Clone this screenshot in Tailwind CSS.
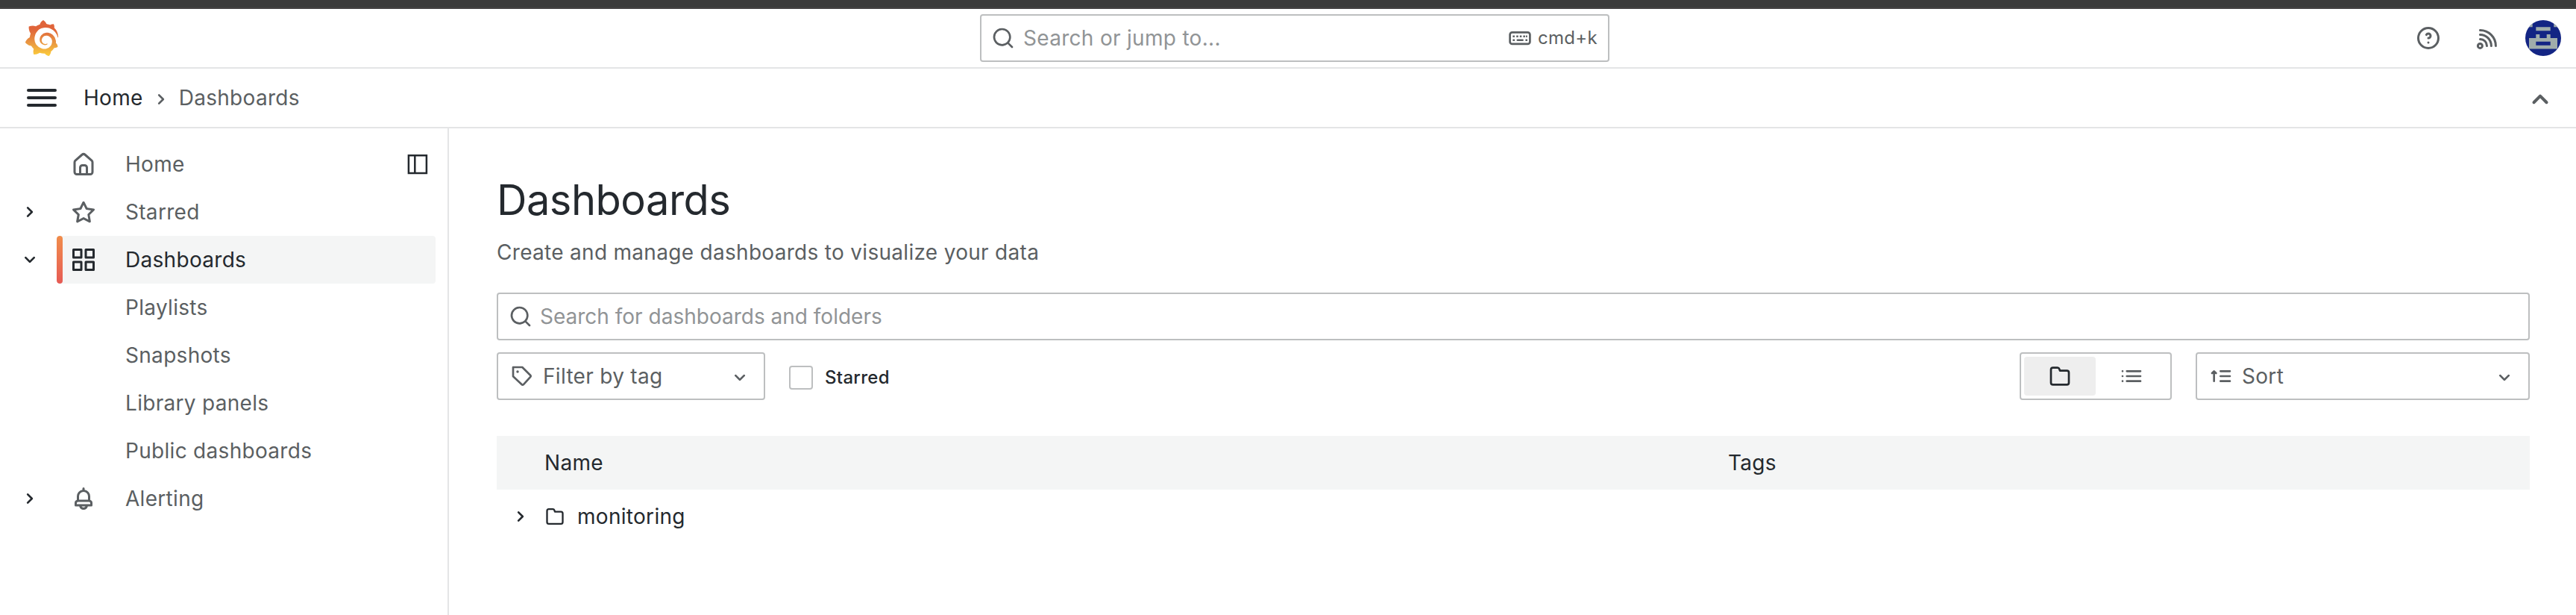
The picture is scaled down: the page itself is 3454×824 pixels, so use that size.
<!DOCTYPE html>
<html lang="en">
<head>
<meta charset="utf-8">
<title>Dashboards - Grafana</title>
<script src="https://cdn.jsdelivr.net/npm/@tailwindcss/browser@4"></script>
</head>
<body class="bg-white">
<svg class="hidden">
  <symbol id="right" viewBox="0 0 24 24"><path d="M14.83,11.29,10.59,7.05a1,1,0,0,0-1.42,0,1,1,0,0,0,0,1.41L12.71,12,9.17,15.54a1,1,0,0,0,0,1.41,1,1,0,0,0,.71.29,1,1,0,0,0,.71-.29l4.24-4.24A1,1,0,0,0,14.83,11.29Z"/></symbol>
  <symbol id="down" viewBox="0 0 24 24"><path d="M17,9.17a1,1,0,0,0-1.41,0L12,12.71,8.46,9.17a1,1,0,0,0-1.41,0,1,1,0,0,0,0,1.42l4.24,4.24a1,1,0,0,0,1.42,0L17,10.59A1,1,0,0,0,17,9.17Z"/></symbol>
  <symbol id="search" viewBox="0 0 24 24"><path d="M21.71,20.29,18,16.61A9,9,0,1,0,16.61,18l3.68,3.68a1,1,0,0,0,1.42,0A1,1,0,0,0,21.71,20.29ZM11,18a7,7,0,1,1,7-7A7,7,0,0,1,11,18Z"/></symbol>
  <symbol id="folder" viewBox="0 0 24 24"><path d="M19,5.5H12.72l-.32-1a3,3,0,0,0-2.84-2H5a3,3,0,0,0-3,3v13a3,3,0,0,0,3,3H19a3,3,0,0,0,3-3V8.5A3,3,0,0,0,19,5.5Zm1,13a1,1,0,0,1-1,1H5a1,1,0,0,1-1-1V5.5a1,1,0,0,1,1-1H9.56a1,1,0,0,1,.95.68l.54,1.64A1,1,0,0,0,12,7.5h7a1,1,0,0,1,1,1Z"/></symbol>
</svg>
<div class="flex h-[824px] w-[3454px] flex-col overflow-hidden bg-white font-['Inter',sans-serif] text-[28px] leading-[44px] tracking-[0.3px] text-[#24292e]">
  <div class="h-3 shrink-0 border-b-2 border-[#454344] bg-[#3b3b3b]"></div>

  <header class="grid h-20 shrink-0 grid-cols-[1314px_844px_1fr] items-center border-b-2 border-[#e4e5e6]">
    <div class="pl-8">
      <svg class="size-12" viewBox="0 0 24 24">
        <defs><linearGradient id="flame" x1="0" y1="1" x2="0" y2="0"><stop offset="0" stop-color="#fcce3b"/><stop offset=".35" stop-color="#ea9a42"/><stop offset=".75" stop-color="#e0643a"/><stop offset="1" stop-color="#e0643a"/></linearGradient></defs>
        <path fill="url(#flame)" d="M23.02 10.59a8.578 8.578 0 0 0-.862-3.034 8.911 8.911 0 0 0-1.789-2.445c.337-1.342-.413-2.505-.413-2.505-1.292-.08-2.113.4-2.416.62-.052-.02-.102-.044-.154-.064-.22-.089-.446-.172-.677-.247-.231-.073-.47-.14-.711-.197a9.867 9.867 0 0 0-.875-.161C14.557.753 12.94 0 12.94 0c-1.804 1.145-2.147 2.744-2.147 2.744l-.018.093c-.098.029-.2.057-.298.088-.138.042-.275.094-.413.143-.138.055-.275.107-.41.166a8.869 8.869 0 0 0-1.557.87l-.063-.029c-2.497-.955-4.716.195-4.716.195-.203 2.658.996 4.33 1.235 4.636a11.608 11.608 0 0 0-.607 2.635C1.636 12.677.953 15.014.953 15.014c1.926 2.214 4.171 2.351 4.171 2.351.003-.002.006-.002.006-.005.285.509.615.994.986 1.446.156.19.32.371.488.548-.704 2.009.099 3.68.099 3.68 2.144.08 3.553-.937 3.849-1.173a9.784 9.784 0 0 0 3.164.501h.08l.055-.003.107-.002.103-.005.003.002c1.01 1.44 2.788 1.646 2.788 1.646 1.264-1.332 1.337-2.653 1.337-2.94v-.058c0-.02-.003-.039-.003-.06.265-.187.52-.387.758-.6a7.875 7.875 0 0 0 1.415-1.7c1.43.083 2.437-.885 2.437-.885-.236-1.49-1.085-2.216-1.264-2.354l-.018-.013-.016-.013a.217.217 0 0 1-.031-.02c.008-.092.016-.18.02-.27.011-.162.016-.323.016-.48v-.253l-.005-.098-.008-.135a1.891 1.891 0 0 0-.01-.13c-.003-.042-.008-.083-.013-.125l-.016-.124-.018-.122a6.215 6.215 0 0 0-2.032-3.73 6.015 6.015 0 0 0-3.222-1.46 6.292 6.292 0 0 0-.85-.048l-.107.002h-.063l-.044.003-.104.008a4.777 4.777 0 0 0-3.335 1.695c-.332.4-.592.84-.768 1.297a4.594 4.594 0 0 0-.312 1.817l.003.091c.005.055.007.11.013.164a3.615 3.615 0 0 0 .698 1.82 3.53 3.53 0 0 0 1.827 1.282c.33.098.66.14.971.137.039 0 .078 0 .114-.002l.063-.003c.02 0 .041-.003.062-.003.034-.002.065-.007.099-.01.007 0 .018-.003.028-.003l.031-.005.06-.008a1.18 1.18 0 0 0 .112-.02c.036-.008.072-.013.109-.024a2.634 2.634 0 0 0 .914-.415c.028-.02.056-.041.085-.065a.248.248 0 0 0 .039-.35.244.244 0 0 0-.309-.06l-.078.042c-.09.044-.184.083-.283.116a2.476 2.476 0 0 1-.475.096c-.028.003-.054.006-.083.006l-.083.002c-.026 0-.054 0-.08-.002l-.102-.006h-.012l-.024.006c-.016-.003-.031-.003-.044-.006-.031-.002-.06-.007-.091-.01a2.59 2.59 0 0 1-.724-.213 2.557 2.557 0 0 1-.667-.438 2.52 2.52 0 0 1-.805-1.475 2.306 2.306 0 0 1-.029-.444l.006-.122v-.023l.002-.031c.003-.021.003-.04.005-.06a3.163 3.163 0 0 1 1.352-2.29 3.12 3.12 0 0 1 .937-.43 2.946 2.946 0 0 1 .776-.101h.06l.07.002.045.003h.026l.07.005a4.041 4.041 0 0 1 1.635.49 3.94 3.94 0 0 1 1.602 1.662 3.77 3.77 0 0 1 .397 1.414l.005.076.003.075c.002.026.002.05.002.075 0 .024.003.052 0 .07v.065l-.002.073-.008.174a6.195 6.195 0 0 1-.08.639 5.1 5.1 0 0 1-.267.927 5.31 5.31 0 0 1-.624 1.13 5.052 5.052 0 0 1-3.237 2.014 4.82 4.82 0 0 1-.649.066l-.039.003h-.287a6.607 6.607 0 0 1-1.716-.265 6.776 6.776 0 0 1-3.4-2.274 6.75 6.75 0 0 1-.746-1.15 6.616 6.616 0 0 1-.714-2.596l-.005-.083-.002-.02v-.056l-.003-.073v-.096l-.003-.104v-.07l.003-.163c.008-.22.026-.45.054-.678a8.707 8.707 0 0 1 .28-1.355c.128-.444.286-.872.473-1.277a7.04 7.04 0 0 1 1.456-2.1 5.925 5.925 0 0 1 .953-.763c.169-.111.343-.213.524-.306.089-.05.182-.091.273-.135.047-.02.093-.042.138-.062a7.177 7.177 0 0 1 .714-.267l.145-.045c.049-.015.098-.026.148-.041.098-.029.197-.052.296-.076.049-.013.1-.02.15-.033l.15-.032.151-.028.076-.013.075-.01.153-.024c.057-.01.114-.013.171-.023l.169-.021c.036-.003.073-.008.106-.01l.073-.008.036-.003.042-.002c.057-.003.114-.008.171-.01l.086-.006h.023l.037-.003.145-.007a7.999 7.999 0 0 1 1.708.125 7.917 7.917 0 0 1 2.048.68 8.253 8.253 0 0 1 1.672 1.09l.09.077.089.078c.06.052.114.107.171.159.057.052.112.106.166.16.052.055.107.107.159.164a8.671 8.671 0 0 1 1.41 1.978c.012.026.028.052.04.078l.04.078.075.156c.023.051.05.1.07.153l.065.15a8.848 8.848 0 0 1 .45 1.34.19.19 0 0 0 .201.142.186.186 0 0 0 .172-.184c.01-.246.002-.532-.024-.856z"/>
      </svg>
    </div>
    <div class="flex h-16 items-center rounded-[4px] border-2 border-[#bdbfc0] pr-[14px] pl-[13px] text-[#5b5f62]">
      <svg class="size-8 fill-current"><use href="#search"/></svg>
      <span class="ml-[11px] text-[#919496]">Search or jump to...</span>
      <svg class="ml-auto size-8" viewBox="0 0 32 32" fill="none" stroke="currentColor" stroke-width="2.7"><rect x="2.6" y="8.3" width="26.8" height="15.6" rx="3"/><path stroke-width="2.4" d="M6.4 13.7h2.5M11.2 13.7h2.5M15.8 13.7h2.5M20.4 13.7h2.5M24 13.7h1.8M6.4 18.8h2.6M23.4 18.8h2.6"/><path stroke-width="2.6" stroke-linecap="round" d="M12.8 18.8h6.8"/></svg>
      <span class="ml-2 text-[24px] tracking-[0.3px]">cmd+k</span>
    </div>
    <div class="flex items-center justify-end pr-5 text-[#5b5f62]">
      <svg class="size-9 fill-current" viewBox="0 0 24 24"><path d="M11.29,15.29a1.58,1.58,0,0,0-.12.15.76.76,0,0,0-.09.18.64.64,0,0,0-.06.18,1.36,1.36,0,0,0,0,.2.84.84,0,0,0,.08.38.9.9,0,0,0,.54.54.94.94,0,0,0,.76,0,.9.9,0,0,0,.54-.54A1,1,0,0,0,13,16a1,1,0,0,0-.29-.71A1,1,0,0,0,11.29,15.29ZM12,2A10,10,0,1,0,22,12,10,10,0,0,0,12,2Zm0,18a8,8,0,1,1,8-8A8,8,0,0,1,12,20ZM12,7A3,3,0,0,0,9.4,8.5a1,1,0,1,0,1.73,1A1,1,0,0,1,12,9a1,1,0,0,1,0,2,1,1,0,1,0,0,2,3,3,0,0,0,0-6Z"/></svg>
      <svg class="ml-[42px] size-9" viewBox="0 0 36 36" fill="none" stroke="currentColor" stroke-width="3" stroke-linecap="round"><circle cx="9.4" cy="28.4" r="3"/><path d="M9.5 7.5A21 21 0 0 1 30.4 28.4M9.5 13.4A15 15 0 0 1 24.4 28.4M9.5 19.4A9 9 0 0 1 18.5 28.4"/></svg>
      <svg class="ml-[34px] size-12 rounded-full" viewBox="0 0 48 48"><path fill="#132584" d="M0 0h48v48H0z"/><path fill="#a0adab" d="M0 0h9.7v9.3H0zM38.3 0H48v9.3h-9.7zM14.3 9.3h19.4v4.9H14.3zM5 24h9.3v-5h5v5h9.4v-5h5v5H43v14.5H5z"/><path fill="#132584" d="M14.3 28.7h19.4v5H14.3z"/></svg>
    </div>
  </header>

  <nav class="flex h-20 shrink-0 items-center border-b-2 border-[#e4e5e6] pl-9">
    <div class="flex w-10 flex-col gap-[6px]"><i class="h-1 rounded-full bg-[#24292e]"></i><i class="h-1 rounded-full bg-[#24292e]"></i><i class="h-1 rounded-full bg-[#24292e]"></i></div>
    <span class="ml-9">Home</span>
    <svg class="mt-1 ml-2 size-8 fill-[#5b5f62]"><use href="#right"/></svg>
    <span class="ml-2 text-[#5b5f62]">Dashboards</span>
    <svg class="mt-1 mr-6 ml-auto size-12 fill-[#5b5f62]" viewBox="0 0 24 24"><path d="M17,13.41,12.71,9.17a1,1,0,0,0-1.42,0L7.05,13.41a1,1,0,0,0,0,1.42,1,1,0,0,0,1.41,0L12,11.29l3.54,3.54a1,1,0,0,0,.7.29,1,1,0,0,0,.71-.29A1,1,0,0,0,17,13.41Z"/></svg>
  </nav>

  <div class="flex min-h-0 flex-1">
    <aside class="w-[602px] shrink-0 border-r-2 border-[#e4e5e6] pt-4 pr-4 text-[#5b5f62]">
      <div class="flex h-16 items-center pr-2 pl-[94px]">
        <svg class="size-9 fill-current" viewBox="0 0 24 24"><path d="M20,8h0L14,2.74a3,3,0,0,0-4,0L4,8a3,3,0,0,0-1,2.26V19a3,3,0,0,0,3,3H18a3,3,0,0,0,3-3V10.25A3,3,0,0,0,20,8ZM14,20H10V15a1,1,0,0,1,1-1h2a1,1,0,0,1,1,1Zm5-1a1,1,0,0,1-1,1H16V15a3,3,0,0,0-3-3H11a3,3,0,0,0-3,3v5H6a1,1,0,0,1-1-1V10.25a1,1,0,0,1,.34-.75l6-5.25a1,1,0,0,1,1.32,0l6,5.25a1,1,0,0,1,.34.75Z"/></svg>
        <span class="ml-[38px]">Home</span>
        <svg class="ml-auto size-8" viewBox="0 0 32 32" fill="none" stroke="#24292e" stroke-width="2.5"><path d="M3.9 4.25h24v23.7h-24zM12.3 4v24"/></svg>
      </div>
      <div class="flex h-16 items-center pl-6">
        <svg class="size-8 fill-[#24292e]"><use href="#right"/></svg>
        <svg class="ml-[38px] size-9 fill-current" viewBox="0 0 24 24"><path d="M22,9.67A1,1,0,0,0,21.14,9l-5.69-.83L12.9,3a1,1,0,0,0-1.8,0L8.55,8.16,2.86,9a1,1,0,0,0-.81.68,1,1,0,0,0,.25,1l4.13,4-1,5.68A1,1,0,0,0,6.9,21.44L12,18.77l5.1,2.67a.93.93,0,0,0,.46.12,1,1,0,0,0,.59-.19,1,1,0,0,0,.4-1l-1-5.68,4.13-4A1,1,0,0,0,22,9.67Zm-6.15,4a1,1,0,0,0-.29.88l.72,4.2-3.76-2a1.06,1.06,0,0,0-.94,0l-3.76,2,.72-4.2a1,1,0,0,0-.29-.88l-3-3,4.21-.61a1,1,0,0,0,.76-.55L12,5.7l1.88,3.82a1,1,0,0,0,.76.55l4.21.61Z"/></svg>
        <span class="ml-[38px]">Starred</span>
      </div>
      <div class="flex h-16 items-center pl-6 text-[#24292e]">
        <svg class="size-8 fill-current"><use href="#down"/></svg>
        <div class="ml-5 flex h-16 flex-1 items-center overflow-hidden rounded-[4px] bg-[#f4f5f5]">
          <i class="h-16 w-2 rounded-[4px] bg-linear-to-b from-[#f08c4a] to-[#e65a54]"></i>
          <svg class="ml-[10px] size-9 fill-current" viewBox="0 0 24 24"><path d="M10,13H3a1,1,0,0,0-1,1v7a1,1,0,0,0,1,1h7a1,1,0,0,0,1-1V14A1,1,0,0,0,10,13ZM9,20H4V15H9ZM21,2H14a1,1,0,0,0-1,1v7a1,1,0,0,0,1,1h7a1,1,0,0,0,1-1V3A1,1,0,0,0,21,2ZM20,9H15V4h5Zm1,4H14a1,1,0,0,0-1,1v7a1,1,0,0,0,1,1h7a1,1,0,0,0,1-1V14A1,1,0,0,0,21,13Zm-1,7H15V15h5ZM10,2H3A1,1,0,0,0,2,3v7a1,1,0,0,0,1,1h7a1,1,0,0,0,1-1V3A1,1,0,0,0,10,2ZM9,9H4V4H9Z"/></svg>
          <span class="ml-[38px]">Dashboards</span>
        </div>
      </div>
      <div class="flex h-16 items-center pl-[168px]">Playlists</div>
      <div class="flex h-16 items-center pl-[168px]">Snapshots</div>
      <div class="flex h-16 items-center pl-[168px]">Library panels</div>
      <div class="flex h-16 items-center pl-[168px]">Public dashboards</div>
      <div class="flex h-16 items-center pl-6">
        <svg class="size-8 fill-[#24292e]"><use href="#right"/></svg>
        <svg class="ml-[38px] size-9 fill-current" viewBox="0 0 24 24"><path d="M18,13.18V10a6,6,0,0,0-5-5.91V3a1,1,0,0,0-2,0V4.09A6,6,0,0,0,6,10v3.18A3,3,0,0,0,4,16v2a1,1,0,0,0,1,1H8.14a4,4,0,0,0,7.72,0H19a1,1,0,0,0,1-1V16A3,3,0,0,0,18,13.18ZM8,10a4,4,0,0,1,8,0v3H8Zm4,10a2,2,0,0,1-1.72-1h3.44A2,2,0,0,1,12,20Zm6-3H6V16a1,1,0,0,1,1-1H17a1,1,0,0,1,1,1Z"/></svg>
        <span class="ml-[38px]">Alerting</span>
      </div>
    </aside>

    <main class="min-w-0 flex-1 pt-16 pr-[62px] pl-16">
      <h1 class="text-[56px] leading-[64px] tracking-[-0.5px]">Dashboards</h1>
      <p class="mt-4 text-[#5b5f62]">Create and manage dashboards to visualize your data</p>

      <div class="mt-8 flex h-16 items-center rounded-[4px] border-2 border-[#bdbfc0] pl-[14px]">
        <svg class="size-8 fill-[#5b5f62]"><use href="#search"/></svg>
        <span class="ml-[10px] tracking-normal text-[#919496]">Search for dashboards and folders</span>
      </div>

      <div class="mt-4 flex h-16 items-center text-[#5b5f62]">
        <div class="flex h-16 w-[360px] items-center rounded-[4px] border-2 border-[#bdbfc0] pr-4 pl-4">
          <svg class="size-8" viewBox="0 0 24 24" fill="none" stroke="currentColor" stroke-width="2" stroke-linejoin="round"><path d="M3 3H12.2L20.3 11.1a1.3 1.3 0 0 1 0 1.8L13.5 20.3a1.3 1.3 0 0 1-1.9 0L3 12.2Z"/><circle cx="7.5" cy="7.5" r="1.3" fill="currentColor" stroke="none"/></svg>
          <span class="ml-3">Filter by tag</span>
          <svg class="mt-1 ml-auto size-8 fill-current"><use href="#down"/></svg>
        </div>
        <i class="mt-1 ml-8 size-8 rounded-[4px] border-2 border-[#bdbfc0]"></i>
        <span class="mt-1 ml-4 text-[24px] font-medium tracking-[0.3px] text-[#24292e]">Starred</span>
        <div class="ml-auto flex h-16 w-[204px] items-center rounded-[4px] border-2 border-[#bdbfc0] pl-1">
          <div class="flex h-[52px] w-24 items-center justify-center rounded-[4px] bg-[#eeeeee]"><svg class="size-8 fill-[#24292e]"><use href="#folder"/></svg></div>
          <div class="flex h-[52px] w-24 items-center justify-center"><svg class="size-8" viewBox="0 0 24 24" fill="none" stroke="currentColor" stroke-width="2" stroke-linecap="round"><path d="M7.3 7H21M7.3 12H21M7.3 17H21M3 7h.01M3 12h.01M3 17h.01"/></svg></div>
        </div>
        <div class="ml-8 flex h-16 w-[448px] items-center rounded-[4px] border-2 border-[#bdbfc0] px-4">
          <svg class="size-8" viewBox="0 0 24 24" fill="none" stroke="currentColor" stroke-width="2" stroke-linecap="round" stroke-linejoin="round"><path d="M11.5 7H21M11.5 12H21M11.5 17H21M5 17V7.3M3 9l2-2 2 2"/></svg>
          <span class="ml-3">Sort</span>
          <svg class="mt-1 ml-auto size-8 fill-current"><use href="#down"/></svg>
        </div>
      </div>

      <div class="mt-12 grid h-[72px] grid-cols-[1587px_1fr] items-center bg-[#f4f5f5] pl-16"><span>Name</span><span>Tags</span></div>
      <div class="flex h-[72px] items-center pl-4">
        <svg class="size-8 fill-current"><use href="#right"/></svg>
        <svg class="ml-4 size-7 fill-current"><use href="#folder"/></svg>
        <span class="ml-4">monitoring</span>
      </div>
    </main>
  </div>
</div>
</body>
</html>
